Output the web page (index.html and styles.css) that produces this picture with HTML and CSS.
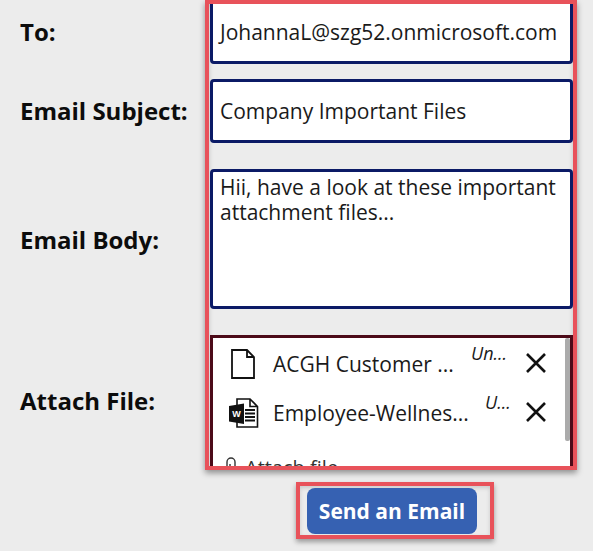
FILE: index.html
```html
<!DOCTYPE html>
<html lang="en">
<head>
  <meta charset="UTF-8" />
  <title>Send an Email</title>
  <link rel="stylesheet" href="styles.css">
</head>
<body>
  <div class="form">
    <div class="labels">
      <div class="label label-to">To:</div>
      <div class="label label-subject">Email Subject:</div>
      <div class="label label-body">Email Body:</div>
      <div class="label label-attach">Attach File:</div>
    </div>
    <div class="fields">
      <div class="field field-to">JohannaL@szg52.onmicrosoft.com</div>
      <div class="field field-subject">Company Important Files</div>
      <div class="field field-body">Hii, have a look at these important attachment files...</div>
      <div class="attach">
        <div class="scroll-thumb"></div>
        <div class="file-row">
          <svg class="file-icon" width="30" height="30" viewBox="0 0 30 30">
            <path d="M3 1H18L25 8V29H3Z M18 1V8H25" fill="none" stroke="#111" stroke-width="1.800"/>
          </svg>
          <span class="file-name">ACGH Customer ...</span>
          <span class="file-status status-one">Un...</span>
          <svg class="remove" width="22" height="22" viewBox="0 0 22 22">
            <path d="M2 2L20 20M20 2L2 20" stroke="#111" stroke-width="2.600"/>
          </svg>
        </div>
        <div class="file-row">
          <svg class="file-icon" width="30" height="30" viewBox="0 0 30 30">
            <path d="M8 1H21L28.500 8.500V29H8Z M21 1V8.500H28.500" fill="#fff" stroke="#111" stroke-width="1.600"/>
            <path d="M16 12H26M16 15.500H26M16 19H26M16 22.500H26" stroke="#111" stroke-width="1.800"/>
            <path d="M0 8L15 5.500V26L0 23.500Z" fill="#111"/>
            <text class="word-letter" x="7.500" y="19" text-anchor="middle">W</text>
          </svg>
          <span class="file-name">Employee-Wellnes...</span>
          <span class="file-status status-two">U...</span>
          <svg class="remove" width="22" height="22" viewBox="0 0 22 22">
            <path d="M2 2L20 20M20 2L2 20" stroke="#111" stroke-width="2.600"/>
          </svg>
        </div>
        <div class="attach-link">
          <svg width="14" height="24" viewBox="0 0 14 24">
            <path d="M3 20V6A4 4 0 0 1 11 6V18A2.500 2.500 0 0 1 6 18V8" fill="none" stroke="#333" stroke-width="1.400"/>
          </svg>
          <span>Attach file</span>
        </div>
      </div>
    </div>
  </div>
  <div class="send-wrap">
    <div class="send-outline">
      <button class="send-btn">Send an Email</button>
    </div>
  </div>
</body>
</html>
```

FILE: styles.css
```css
* {
  margin: 0;
  padding: 0;
  box-sizing: border-box;
}
html, body {
  width: 100%;
  height: 100%;
  overflow: hidden;
}
body {
  background: #ececec;
  color: #111;
  font-family: 'Open Sans', sans-serif;
}
.form {
  display: flex;
  height: 470px;
}
.labels {
  width: 205px;
  padding-left: 20px;
  margin-top: -1px;
  display: flex;
  flex-direction: column;
}
.label {
  display: flex;
  align-items: center;
  flex-shrink: 0;
  font-size: 24px;
  font-weight: 700;
  color: #0c0c0c;
}
.label-to { height: 64px; }
.label-subject { height: 94px; }
.label-body { height: 165px; }
.label-attach { height: 157px; }
.fields {
  width: 372px;
  height: 470px;
  border: 4px solid #e8525a;
  padding-left: 1px;
  overflow: hidden;
  display: flex;
  flex-direction: column;
  box-shadow: 0 3px 6px rgba(0, 0, 0, 0.4), inset 0 3px 5px rgba(0, 0, 0, 0.18);
}
.field {
  background: #fff;
  border: 3px solid #0b1a66;
  border-radius: 4px;
  padding: 0 7px;
  font-size: 21px;
  color: #1a1a1a;
  flex-shrink: 0;
}
.field-to {
  height: 80px;
  margin-top: -20px;
  padding-top: 31px;
  white-space: nowrap;
}
.field-subject {
  height: 64px;
  margin-top: 15px;
  line-height: 58px;
}
.field-body {
  height: 140px;
  margin-top: 26px;
  padding-top: 3px;
  line-height: 25px;
}
.attach {
  position: relative;
  height: 132px;
  margin-top: 26px;
  background: #fff;
  border: 3px solid #4c0a18;
  border-bottom: 0;
  flex-shrink: 0;
  overflow: hidden;
  padding-top: 1px;
}
.scroll-thumb {
  position: absolute;
  top: 0;
  right: 0;
  width: 5px;
  height: 103px;
  background: #ababab;
  border-radius: 2px;
}
.file-row {
  position: relative;
  height: 49px;
  display: flex;
  align-items: center;
  font-size: 21px;
  color: #1a1a1a;
}
.file-icon {
  margin-left: 16px;
  flex-shrink: 0;
}
.file-name {
  position: absolute;
  left: 60px;
  white-space: nowrap;
}
.file-status {
  position: absolute;
  top: 2px;
  font-size: 18px;
  font-style: italic;
}
.status-one { left: 258px; }
.status-two { left: 272px; }
.remove {
  position: absolute;
  left: 312px;
  top: 13px;
}
.word-letter {
  font-family: 'Liberation Sans', sans-serif;
  font-size: 9px;
  font-weight: 700;
  fill: #fff;
}
.attach-link {
  display: flex;
  align-items: center;
  gap: 7px;
  margin-left: 11px;
  margin-top: 17px;
  font-size: 20px;
  color: #333;
}
.send-wrap {
  display: flex;
  padding: 12px 0 0 296px;
}
.send-outline {
  width: 198px;
  height: 57px;
  border: 4px solid #e8525a;
  padding: 2px 0 0 7px;
  box-shadow: 0 3px 5px rgba(0, 0, 0, 0.35), inset 0 2px 4px rgba(0, 0, 0, 0.15);
}
.send-btn {
  width: 170px;
  height: 46px;
  border: 0;
  border-radius: 8px;
  background: #3661b2;
  color: #fff;
  font-family: 'Open Sans', sans-serif;
  font-size: 21px;
  font-weight: 700;
}
```
